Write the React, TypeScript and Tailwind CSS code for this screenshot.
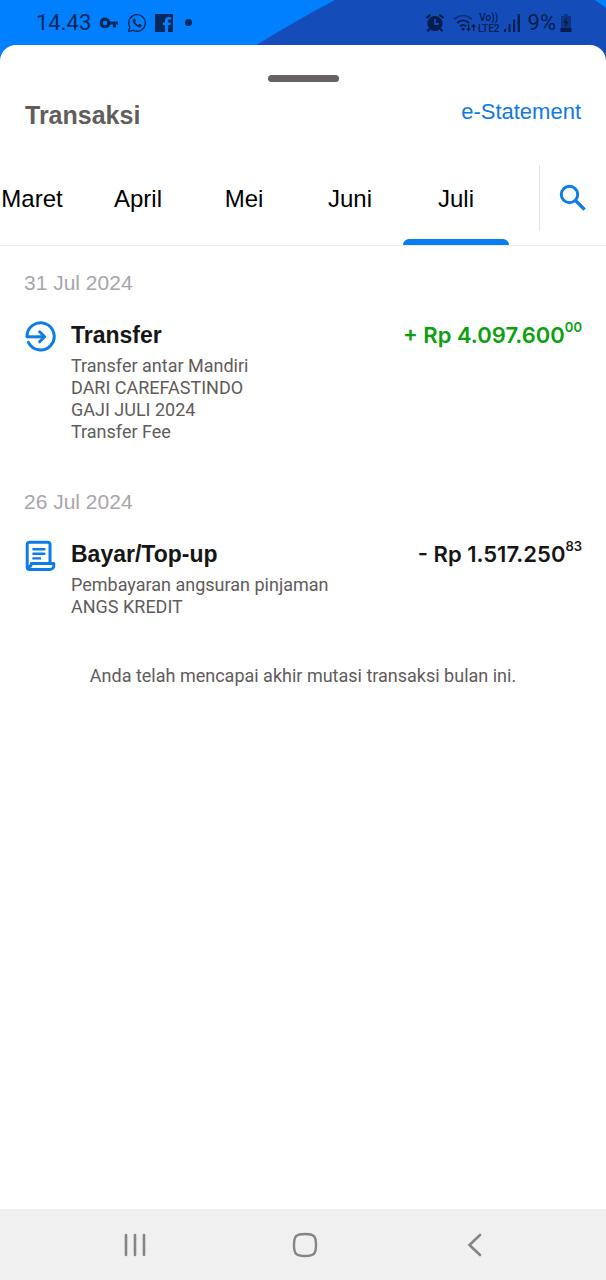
import React from 'react';
import clsx from 'clsx';

type Transaction = {
  date: string;
  title: string;
  icon: React.FC;
  details: string[];
  sign: '+' | '-';
  amount: string;
  cents: string;
};

const months = ['Maret', 'April', 'Mei', 'Juni', 'Juli'];

const TransferIcon: React.FC = () => (
  <svg viewBox="0 0 32 32" className="h-8 w-8 shrink-0" fill="none" stroke="#0d7be8" strokeWidth="3" aria-hidden="true">
    <path d="M2 15.8A13.6 13.6 0 1 1 3.4 21.4" strokeLinecap="round" strokeLinejoin="round" />
    <path d="M2 15.8H19" />
    <path d="M14.6 10.8L19.6 15.8L14.6 20.8" strokeLinecap="round" strokeLinejoin="round" />
  </svg>
);

const BillIcon: React.FC = () => (
  <svg viewBox="0 0 32 32" className="h-8 w-8 shrink-0" fill="none" stroke="#0d7be8" strokeWidth="3" strokeLinejoin="round" strokeLinecap="round" aria-hidden="true">
    <path d="M2.2 27V4.6A2.4 2.4 0 0 1 4.6 2.2H22.6A2.4 2.4 0 0 1 25 4.6V23" />
    <path d="M6.4 23.6H28.8V25.4A4 4 0 0 1 24.8 29.4H4.4A2.2 2.2 0 0 1 2.2 27.2Q6 27.2 6.4 23.6Z" />
    <path d="M8.4 9.2H19.4M8.4 13.8H19.4M8.4 18.4H15" strokeWidth="2.4" />
  </svg>
);

const transactions: Transaction[] = [
  {
    date: '31 Jul 2024',
    title: 'Transfer',
    icon: TransferIcon,
    details: ['Transfer antar Mandiri', 'DARI CAREFASTINDO', 'GAJI JULI 2024', 'Transfer Fee'],
    sign: '+',
    amount: '4.097.600',
    cents: '00'
  },
  {
    date: '26 Jul 2024',
    title: 'Bayar/Top-up',
    icon: BillIcon,
    details: ['Pembayaran angsuran pinjaman', 'ANGS KREDIT'],
    sign: '-',
    amount: '1.517.250',
    cents: '83'
  }
];

const StatusBar: React.FC = () => (
  <header className="relative flex h-[45px] items-center justify-between pl-9 pr-[34px] font-[Roboto,sans-serif] text-[#06295c]">
    {/* Two-tone backdrop, also visible behind the rounded corners of the sheet */}
    <svg className="absolute inset-x-0 top-0 -z-10 h-16 w-full" viewBox="0 0 606 64" preserveAspectRatio="none" aria-hidden="true">
      <rect width="606" height="64" fill="#0080ff" />
      <path d="M226 64Q282 28 335 0H595L606 8V64Z" fill="#144cba" />
    </svg>

    <div className="flex items-center gap-2">
      <span className="text-[22px] leading-none">14.43</span>
      <svg viewBox="0 0 20 12" className="h-3 w-5" fill="currentColor" aria-hidden="true">
        <path fillRule="evenodd" d="M6 0.5A5.4 5.4 0 1 0 11.2 7.6H14V10.6H17V7.6H19V4.4H11.2A5.4 5.4 0 0 0 6 0.5ZM6 3.8A2.2 2.2 0 1 1 6 8.2A2.2 2.2 0 0 1 6 3.8Z" />
      </svg>
      <svg viewBox="0 0 20 20" className="h-5 w-5" aria-hidden="true">
        <path d="M1.6 18.4L2.8 14A8.3 8.3 0 1 1 6.2 17.3Z" fill="none" stroke="currentColor" strokeWidth="1.4" />
        <path d="M7.2 5.4C5 6.3 5.4 9.2 7.6 11.6C10.2 14.4 13 15.4 14.4 13.5C14.9 12.8 14.9 12.1 14.4 11.8L12.7 11C12.2 10.8 11.8 12.2 11.1 11.9C9.8 11.4 8.7 10.2 8.1 9.1C7.9 8.6 9 8.1 8.8 7.6L8.2 5.9C8 5.4 7.6 5.3 7.2 5.4Z" fill="currentColor" />
      </svg>
      <svg viewBox="0 0 18 18" className="h-[18px] w-[18px]" aria-hidden="true">
        <path fillRule="evenodd" fill="currentColor" d="M0 0H18V18H13V11.2H15.4L15.8 8.4H13V6.8C13 5.9 13.4 5.5 14.3 5.5H16V3H13.6C11.2 3 10 4.3 10 6.4V8.4H7.8V11.2H10V18H0Z" />
      </svg>
      <span className="ml-1 h-[7px] w-[7px] rounded-full bg-current" />
    </div>

    <div className="flex items-center text-[#061d4d]">
      <svg viewBox="0 0 20 20" className="h-5 w-5" aria-hidden="true">
        <circle cx="10" cy="10.5" r="7.6" fill="currentColor" />
        <path d="M1.4 5L5.4 1.6M18.6 5L14.6 1.6M4.6 15.6L2.6 18.4M15.4 15.6L17.4 18.4" stroke="currentColor" strokeWidth="2.2" />
        <path d="M10 6V11H14" fill="none" stroke="#144cba" strokeWidth="1.8" />
      </svg>
      <svg viewBox="0 0 24 20" className="ml-2 h-5 w-6" fill="none" stroke="currentColor" aria-hidden="true">
        <path d="M1 6.4Q10 -1.4 19 6.4" strokeWidth="1.6" opacity="0.6" />
        <path d="M4 10Q10 4.8 16 10" strokeWidth="1.8" />
        <path d="M7 13.2Q10 10.6 13 13.2" strokeWidth="1.8" />
        <circle cx="10" cy="16" r="1.6" fill="currentColor" stroke="none" />
        <path d="M15.6 11.4V17.4M13.8 15.4L15.6 17.4L17.4 15.4M20.6 18V11.8M18.8 13.8L20.6 11.8L22.4 13.8" strokeWidth="1.4" />
      </svg>
      <span className="ml-px flex flex-col items-center text-[10px] font-medium leading-[11px]">
        <span>Vo))</span>
        <span>LTE2</span>
      </span>
      <svg viewBox="0 0 16 18" className="ml-1 h-[18px] w-4" fill="currentColor" aria-hidden="true">
        <path d="M0 15H2V18H0ZM4.5 10H6.5V18H4.5ZM9 5.5H11.2V18H9ZM13.6 0H16V18H13.6Z" />
      </svg>
      <span className="ml-2 text-[22px] leading-none">9%</span>
      <svg viewBox="0 0 12 20" className="ml-1 h-5 w-3" fill="currentColor" aria-hidden="true">
        <path d="M4 1H8V3H11V15H1V3H4Z" opacity="0.5" />
        <path d="M0.5 15H11.5V19H0.5Z" />
        <path d="M7 4L3 10H5.6L4.6 14.4L9 8.4H6.4Z" />
      </svg>
    </div>
  </header>
);

const MonthTabs: React.FC = () => {
  const [active, setActive] = React.useState('Juli');

  return (
    <div className="mt-[34px] flex border-b border-[#ebebeb]">
      <div role="tablist" className="flex min-w-0 flex-1 justify-end overflow-hidden pr-[30px]">
        {months.map((month) => (
          <button
            key={month}
            role="tab"
            aria-selected={month === active}
            onClick={() => setActive(month)}
            className="flex h-20 w-[106px] shrink-0 flex-col items-center text-[24px] leading-8 text-black"
          >
            <span className="mt-[18px]">{month}</span>
            <span className={clsx('mt-auto h-1.5 w-full rounded-t-md', month === active && 'bg-[#0a7cf2]')} />
          </button>
        ))}
      </div>
      <button aria-label="Cari transaksi" className="flex h-[66px] w-[67px] items-center justify-center border-l border-[#e6e6e6]">
        <svg viewBox="0 0 28 28" className="h-7 w-7" fill="none" stroke="#0d7be8" strokeWidth="3" aria-hidden="true">
          <circle cx="10.5" cy="10.5" r="8.2" />
          <path d="M16.6 16.6L25.6 25.6" strokeWidth="3.4" />
        </svg>
      </button>
    </div>
  );
};

const TransactionItem: React.FC<{ item: Transaction }> = ({ item }) => {
  const Icon = item.icon;

  return (
    <section className="pb-[45px]">
      <h2 className="text-[21px] leading-7 text-[#aaa5aa]">{item.date}</h2>
      <div className="mt-6 flex items-start pl-px">
        <Icon />
        <div className="ml-3.5 min-w-0 flex-1">
          <div className="flex justify-between">
            <h3 className="text-[23px] font-bold leading-7 text-[#161616]">{item.title}</h3>
            <p
              className={clsx(
                'flex whitespace-pre font-[Inter,sans-serif] text-[22px] font-semibold leading-7',
                item.sign === '+' ? 'text-[#0ba00f]' : 'text-[#161616]'
              )}
            >
              {item.sign} Rp {item.amount}
              <sup className="top-0 text-[13px] leading-3">{item.cents}</sup>
            </p>
          </div>
          <div className="mt-1.5 font-[Roboto,sans-serif] text-[18px] leading-[22px] text-[#5f5b5b]">
            {item.details.map((line) => (
              <p key={line}>{line}</p>
            ))}
          </div>
        </div>
      </div>
    </section>
  );
};

const NavigationBar: React.FC = () => (
  <nav className="flex h-[71px] items-center justify-center gap-[130px] bg-[#f0f0f0] pl-1 text-[#858585]">
    <button aria-label="Aplikasi terbaru" className="flex w-10 justify-center">
      <svg viewBox="0 0 24 24" className="h-6 w-6" stroke="currentColor" strokeWidth="2.6" strokeLinecap="round">
        <path d="M3 2V22M12 2V22M21 2V22" />
      </svg>
    </button>
    <button aria-label="Beranda" className="flex w-10 justify-center">
      <svg viewBox="0 0 26 26" className="h-[26px] w-[26px]" fill="none" stroke="currentColor" strokeWidth="2.4">
        <path d="M13 2C22 2 24 4 24 13S22 24 13 24S2 22 2 13S4 2 13 2Z" />
      </svg>
    </button>
    <button aria-label="Kembali" className="flex w-10 justify-center">
      <svg viewBox="0 0 24 24" className="h-6 w-6" fill="none" stroke="currentColor" strokeWidth="2.6" strokeLinecap="round">
        <path d="M17 2L6.5 12L17 22" />
      </svg>
    </button>
  </nav>
);

export default function App() {
  return (
    <div className="isolate flex min-h-screen flex-col bg-white font-['Liberation_Sans',Arial,sans-serif]">
      <StatusBar />
      <main className="flex-1 rounded-t-2xl bg-white">
        <div className="flex justify-center pt-[30px]">
          <span className="h-[7px] w-[71px] rounded-full bg-[#656061]" />
        </div>
        <div className="mt-4 flex items-start justify-between px-[25px]">
          <h1 className="mt-px text-[25px] font-bold leading-8 text-[#625d5d]">Transaksi</h1>
          <a href="#e-statement" className="text-[22px] leading-7 text-[#1079e3]">e-Statement</a>
        </div>
        <MonthTabs />
        <div className="px-6 pt-[23px]">
          {transactions.map((item) => (
            <TransactionItem key={item.date} item={item} />
          ))}
          <p className="mt-0.5 text-center font-[Roboto,sans-serif] text-[18px] leading-[22px] text-[#5f5b5b]">
            Anda telah mencapai akhir mutasi transaksi bulan ini.
          </p>
        </div>
      </main>
      <NavigationBar />
    </div>
  );
}
